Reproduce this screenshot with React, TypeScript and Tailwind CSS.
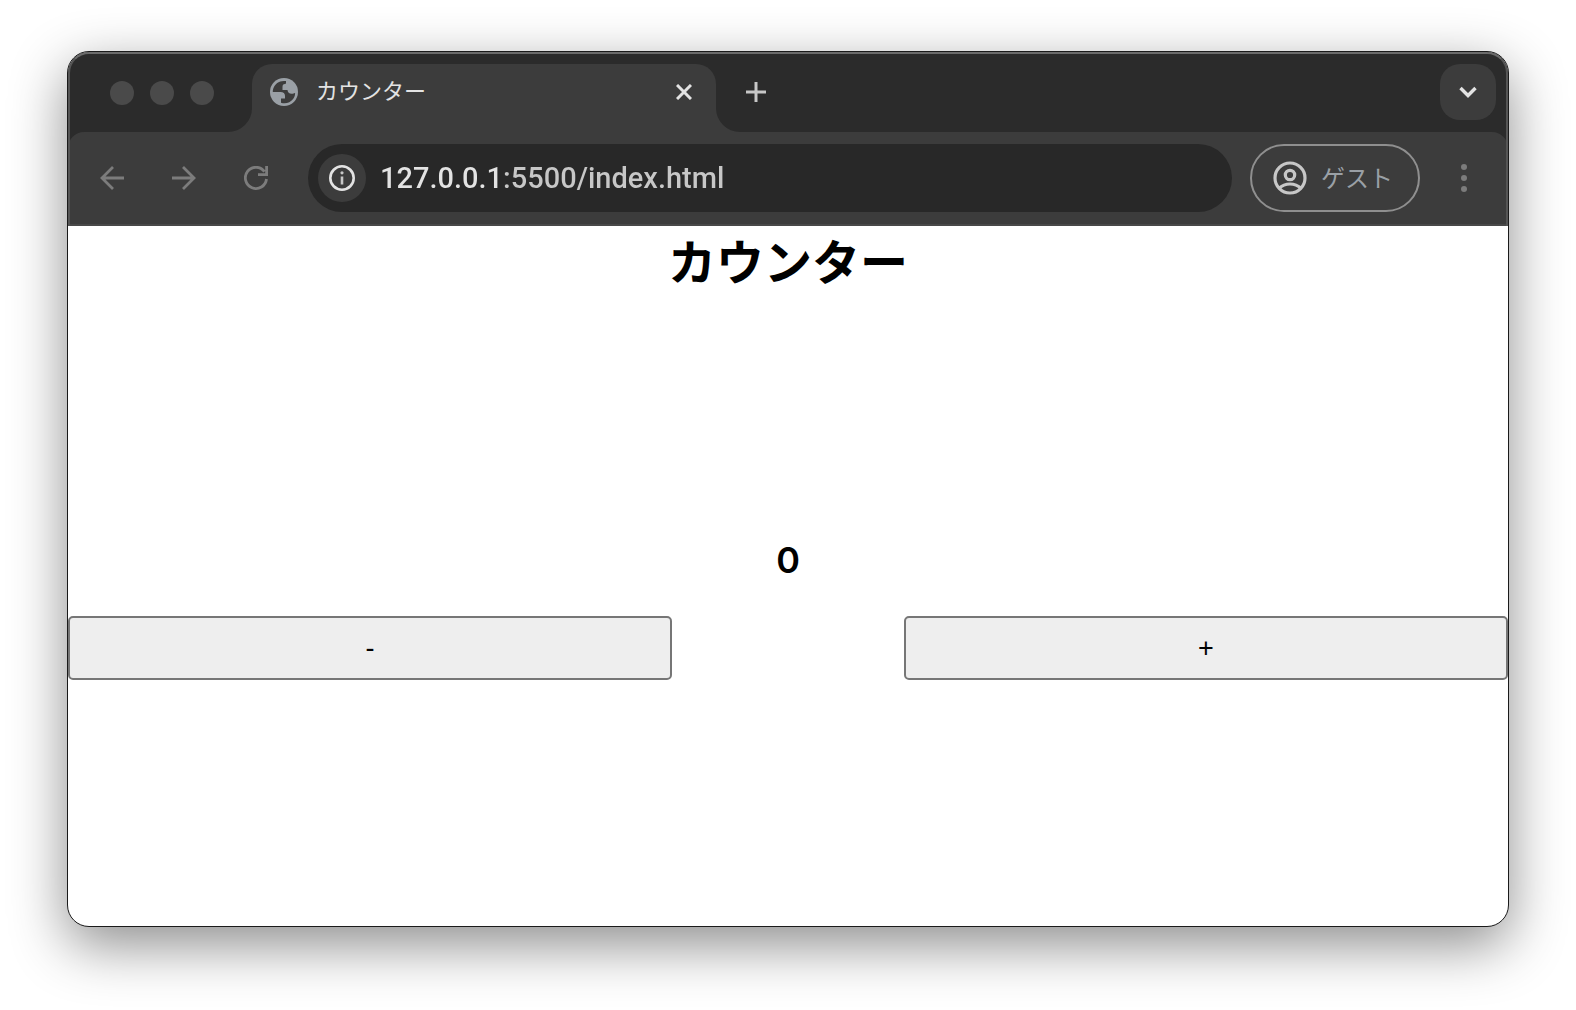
import { useState } from "react";

const sans = "font-[Inter,'Noto_Sans_CJK_JP',sans-serif]";

function TabFoot({ flip = false }: { flip?: boolean }) {
  return (
    <svg
      viewBox="0 0 24 24"
      className={flip ? "h-6 w-6 shrink-0 -scale-x-100 self-end" : "h-6 w-6 shrink-0 self-end"}
      fill="#3c3c3c"
      aria-hidden="true"
    >
      <path d="M24 0v24H0A24 24 0 0 0 24 0z" />
    </svg>
  );
}

function Globe() {
  return (
    <svg viewBox="0 0 28 28" className="h-7 w-7 shrink-0" aria-hidden="true">
      <circle cx="14" cy="14" r="14" fill="#9aa0a6" />
      <path
        d="M16 3.100C10 2 5 5.300 3.300 10.400c-.5 1.300-.6 2.500-.5 3.600h7.700c2.900 0 4.500 1.500 4.500 4v2.400h-4v4.400c4.400 1.500 9.300 0 12.100-3.800 1.500-2 2.100-4.200 2-6.300-1 .8-2.100 1-3.400 1-2.700 0-4-1.300-4.200-3.700h-5V9c0-1.800.8-2.700 2.300-2.900.8-.1 1.200-.6 1.200-1.400z"
        fill="#3c3c3c"
      />
    </svg>
  );
}

export default function App() {
  const [count, setCount] = useState(0);
  const [url, setUrl] = useState("127.0.0.1:5500/index.html");

  return (
    <div className={`${sans} flex min-h-screen bg-white px-[67px] pt-[51px] pb-[83px]`}>
      <div className="flex flex-1 flex-col overflow-hidden rounded-[22px] border border-[#1a1a1a] bg-white shadow-[0_18px_56px_rgba(0,0,0,0.45)]">
        <header className="relative bg-[#2b2b2b]">
          <div className="flex h-20 items-center pr-3 pl-[42px]">
            <div className="flex gap-4 pt-[2px]">
              <span className="h-6 w-6 rounded-full bg-[#4a4a4a]" />
              <span className="h-6 w-6 rounded-full bg-[#4a4a4a]" />
              <span className="h-6 w-6 rounded-full bg-[#4a4a4a]" />
            </div>
            <div className="ml-[14px] flex h-full items-end">
              <TabFoot />
              <div className="flex h-[68px] w-[464px] items-center rounded-t-[20px] bg-[#3c3c3c] pr-6 pb-3 pl-[18px]">
                <Globe />
                <span className="ml-[18px] flex-1 pb-[2px] text-[22px] leading-8 text-[#e3e3e3]">カウンター</span>
                <button type="button" aria-label="タブを閉じる" className="flex h-4 w-4 items-center justify-center">
                  <svg viewBox="0 0 16 16" className="h-4 w-4" stroke="#e3e3e3" strokeWidth="3" aria-hidden="true">
                    <path d="M1 1l14 14M15 1L1 15" />
                  </svg>
                </button>
              </div>
              <TabFoot flip />
            </div>
            <button type="button" aria-label="新しいタブ" className="ml-[6px]">
              <svg viewBox="0 0 20 20" className="h-5 w-5" stroke="#c7c7c7" strokeWidth="3" aria-hidden="true">
                <path d="M10 0v20M0 10h20" />
              </svg>
            </button>
            <button
              type="button"
              aria-label="タブを検索"
              className="ml-auto flex h-14 w-14 items-center justify-center rounded-[20px] bg-[#3c3c3c]"
            >
              <svg viewBox="0 0 18 12" className="h-3 w-[18px]" fill="none" stroke="#e3e3e3" strokeWidth="3.400" aria-hidden="true">
                <path d="M1.500 2L9 9.500 16.500 2" />
              </svg>
            </button>
          </div>

          <div className="flex h-[94px] items-center rounded-t-[16px] border-b-2 border-[#484848] bg-[#3c3c3c] pr-[41px] pl-8">
            <div className="flex gap-12">
              <button type="button" aria-label="戻る">
                <svg viewBox="0 0 24 24" className="h-6 w-6" fill="none" stroke="#7c7c7c" strokeWidth="2.800" aria-hidden="true">
                  <path d="M24 12H2M13 1L2 12l11 11" />
                </svg>
              </button>
              <button type="button" aria-label="進む">
                <svg viewBox="0 0 24 24" className="h-6 w-6" fill="none" stroke="#7c7c7c" strokeWidth="2.800" aria-hidden="true">
                  <path d="M0 12h22M11 1l11 11-11 11" />
                </svg>
              </button>
              <button type="button" aria-label="再読み込み">
                <svg viewBox="0 0 24 24" className="h-6 w-6" fill="none" stroke="#7c7c7c" strokeWidth="2.800" aria-hidden="true">
                  <path d="M22.500 13A10.600 10.600 0 1 1 20.500 5.600M22.600 0v8.600H14" />
                </svg>
              </button>
            </div>

            <div className="ml-10 flex h-[68px] flex-1 items-center rounded-full bg-[#282828] pr-6 pl-[10px]">
              <button
                type="button"
                aria-label="サイト情報を表示"
                className="flex h-12 w-12 shrink-0 items-center justify-center rounded-full bg-[#3c3c3c]"
              >
                <svg viewBox="0 0 26 26" className="h-[26px] w-[26px]" aria-hidden="true">
                  <circle cx="13" cy="13" r="11.700" fill="none" stroke="#e3e3e3" strokeWidth="2.600" />
                  <path d="M13 11.500v8" stroke="#c7c7c7" strokeWidth="2.600" />
                  <circle cx="13" cy="7.800" r="1.600" fill="#c7c7c7" />
                </svg>
              </button>
              <input
                type="text"
                aria-label="アドレス"
                value={url}
                onChange={(e) => setUrl(e.target.value)}
                className="ml-[14px] min-w-0 flex-1 bg-[linear-gradient(90deg,#e3e3e3_121px,#c7c7c7_121px)] bg-clip-text font-[Roboto,sans-serif] text-[29px] leading-10 font-medium text-[#e3e3e3] outline-none [-webkit-text-fill-color:transparent]"
              />
            </div>

            <button
              type="button"
              className="ml-[18px] flex h-[68px] items-center rounded-full border-2 border-[#8f8f8f] pr-[25px] pl-[21px] text-[#9aa0a6]"
            >
              <svg viewBox="0 0 34 34" className="h-[34px] w-[34px]" fill="none" stroke="#c7c7c7" strokeWidth="3.200" aria-hidden="true">
                <circle cx="17" cy="17" r="15" />
                <circle cx="17" cy="14" r="4.700" />
                <path d="M6 27.500C9 24.500 12.500 23 17 23s8 1.500 11 4.500" />
              </svg>
              <span className="ml-[14px] pt-[2px] text-2xl">ゲスト</span>
            </button>

            <button type="button" aria-label="メニュー" className="ml-[41px]">
              <svg viewBox="0 0 6 28" className="h-7 w-[6px]" fill="#7c7c7c" aria-hidden="true">
                <circle cx="3" cy="3" r="3" />
                <circle cx="3" cy="14" r="3" />
                <circle cx="3" cy="25" r="3" />
              </svg>
            </button>
          </div>
          <div className="pointer-events-none absolute inset-0 rounded-t-[21px] border-x-2 border-t-2 border-x-[#555555] border-t-[#6b6b6b]" />
        </header>

        <main className="flex flex-1 flex-col text-black">
          <h1 className="text-center text-5xl leading-[74px] font-bold">カウンター</h1>
          <p className="mt-[232px] text-center text-4xl leading-[56px] font-semibold">{count}</p>
          <div className="mt-7 flex gap-[232px] font-['Liberation_Sans',Arial,sans-serif] text-[27px] leading-8">
            <button
              type="button"
              onClick={() => setCount(count - 1)}
              className="h-16 flex-1 rounded-[5px] border-2 border-[#767676] bg-[#eeeeee]"
            >
              -
            </button>
            <button
              type="button"
              onClick={() => setCount(count + 1)}
              className="h-16 flex-1 rounded-[5px] border-2 border-[#767676] bg-[#eeeeee]"
            >
              +
            </button>
          </div>
        </main>
      </div>
    </div>
  );
}
